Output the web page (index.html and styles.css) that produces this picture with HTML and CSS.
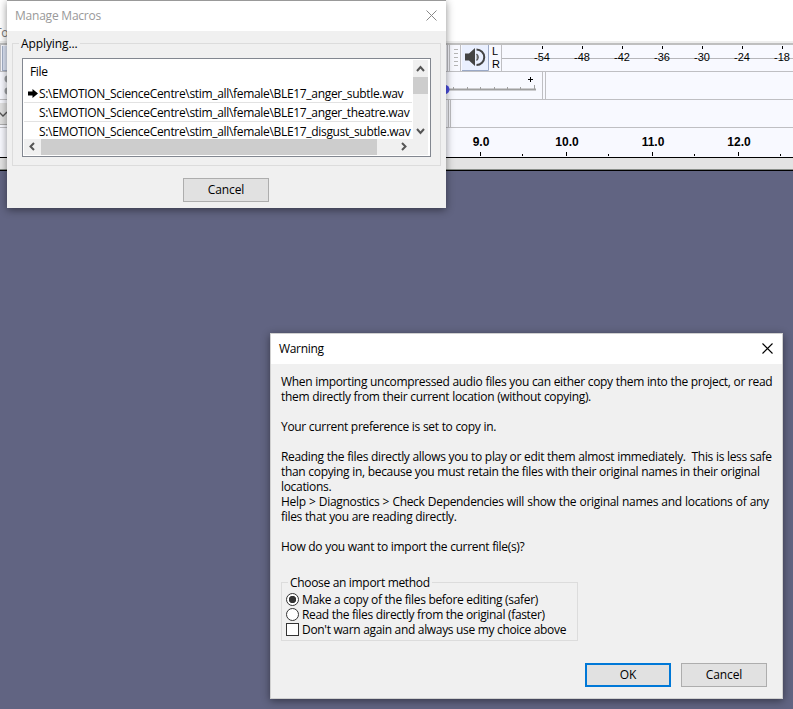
FILE: index.html
```html
<!DOCTYPE html>
<html lang="en">
<head>
<meta charset="utf-8">
<title>Manage Macros</title>
<link rel="stylesheet" href="styles.css">
</head>
<body>
<main class="app">
  <div class="menu-area"><span>To</span></div>
  <section class="toolbars">
    <svg class="left-tools" width="7" height="84" viewBox="0 0 7 84">
      <path d="M.5 0v26M0 26.5h7M0 54.5h7M0 82.5h7" stroke="#bfbfc3"/>
      <path d="M2 1h5v24H2z" fill="#dfe6f7"/>
      <path d="M2.500 1v24M2 25.500h5" stroke="#a5b0c8"/>
      <circle cx="8" cy="34" r="3.500" fill="#a0a2a6"/><circle cx="8" cy="46" r="3.500" fill="#a0a2a6"/>
      <path d="M0 58h7v21H0z" fill="#e1e1e1"/><path d="M0 79.500h7" stroke="#adadad"/>
      <path d="M-1 67l4 4 4-4" fill="none" stroke="#555" stroke-width="1.300"/>
    </svg>
    <div class="right-tools">
      <div class="row meter-row">
        <svg class="meter-button" width="44" height="26" viewBox="0 0 44 26">
          <path d="M2.500 0v26M4.500 0v26M15.500 0v26" stroke="#bfbfc3"/>
          <path d="M9 4.500h4M9 8.500h4M9 12.500h4M9 16.500h4M9 20.500h4" stroke="#b5b5b5"/>
          <path d="M17 0h26v26H17z" fill="#eaf0ff"/>
          <path d="M43.500 0v25.500H17" fill="none" stroke="#9aa8c6"/>
          <path d="M20 8.500h4l6-5.500v18l-6-5.500h-4z" fill="#444"/>
          <path d="M31.500 9q3.500 3 0 6.500" fill="#888" stroke="#555" stroke-width="1.200"/>
          <path d="M31.500 4.500a7.700 7.700 0 0 1 0 15.500" fill="none" stroke="#444" stroke-width="2"/>
        </svg>
        <div class="channels"><span>L</span><span>R</span></div>
        <div class="meter"><span>-54</span><span>-48</span><span>-42</span><span>-36</span><span>-30</span><span>-24</span><span>-18</span></div>
      </div>
      <div class="row">
        <svg width="110" height="27" viewBox="0 0 110 27">
          <path d="M0 17.500h90" stroke="#a0a0a0" stroke-width="2"/>
          <path d="M7.500 15v3M21.500 15v3M34.500 15v3M48.500 15v3M61.500 15v3M74.500 15v3M88.500 13v5" stroke="#a0a0a0"/>
          <circle cx="-1" cy="17.500" r="4.500" fill="#4a4de0"/>
          <path d="M82 7.500h5M84.500 5v5" stroke="#000"/>
          <path d="M96.500 0v27M99.500 0v27" stroke="#bfbfc3"/>
        </svg>
      </div>
      <div class="row">
        <svg width="10" height="27" viewBox="0 0 10 27"><path d="M2.500 0v27M4.500 0v27" stroke="#bfbfc3"/></svg>
      </div>
    </div>
  </section>
  <section class="ruler"><span>9.0</span><span>10.0</span><span>11.0</span><span>12.0</span></section>
  <div class="track-edge"></div>

  <section class="dialog macros">
    <header class="titlebar"><span>Manage Macros</span>
      <svg width="11" height="11" viewBox="0 0 11 11"><path d="M.5.5l10 10M10.500.5l-10 10" stroke="#888"/></svg>
    </header>
    <fieldset class="group applying">
      <legend>Applying...</legend>
      <div class="list">
        <div class="files">
          <div class="file-head">File</div>
          <div class="file"><svg width="10" height="9" viewBox="0 0 10 9"><path d="M0 2.500h4.500V0L10 4.500 4.500 9V6.500H0z"/></svg><span>S:\EMOTION_ScienceCentre\stim_all\female\BLE17_anger_subtle.wav</span></div>
          <div class="file"><span>S:\EMOTION_ScienceCentre\stim_all\female\BLE17_anger_theatre.wav</span></div>
          <div class="file"><span>S:\EMOTION_ScienceCentre\stim_all\female\BLE17_disgust_subtle.wav</span></div>
        </div>
        <div class="vscroll">
          <svg width="15" height="17" viewBox="0 0 15 17"><path d="M4 11l3.500-4 3.500 4" fill="none" stroke="#555" stroke-width="2"/></svg>
          <i></i>
          <svg width="15" height="17" viewBox="0 0 15 17"><path d="M4 7l3.500 4L11 7" fill="none" stroke="#555" stroke-width="2"/></svg>
        </div>
        <div class="hscroll">
          <svg width="17" height="15" viewBox="0 0 17 15"><path d="M10 4L6.500 7.500l3.500 3.500" fill="none" stroke="#555" stroke-width="2"/></svg>
          <i></i>
          <svg width="17" height="15" viewBox="0 0 17 15"><path d="M7 4l3.500 3.500L7 11" fill="none" stroke="#555" stroke-width="2"/></svg>
        </div>
      </div>
    </fieldset>
    <button class="btn">Cancel</button>
  </section>

  <section class="dialog warning">
    <header class="titlebar"><span>Warning</span>
      <svg width="11" height="11" viewBox="0 0 11 11"><path d="M.5.5l10 10M10.500.5l-10 10" stroke="#000" stroke-width="1.100"/></svg>
    </header>
    <div class="message"><span>When importing uncompressed audio files you can either copy them into the project, or read</span>
<span>them directly from their current location (without copying).</span>

<span>Your current preference is set to copy in.</span>

<span>Reading the files directly allows you to play or edit them almost immediately.  This is less safe</span>
<span>than copying in, because you must retain the files with their original names in their original</span>
<span>locations.</span>
<span class="wide">Help &gt; Diagnostics &gt; Check Dependencies will show the original names and locations of any</span>
<span>files that you are reading directly.</span>

<span>How do you want to import the current file(s)?</span></div>
    <fieldset class="group method">
      <legend>Choose an import method</legend>
      <label><i class="radio on"></i><span>Make a copy of the files before editing (safer)</span></label>
      <label><i class="radio"></i><span>Read the files directly from the original (faster)</span></label>
      <label><i class="check"></i><span>Don't warn again and always use my choice above</span></label>
    </fieldset>
    <footer><button class="btn ok">OK</button><button class="btn">Cancel</button></footer>
  </section>
</main>
</body>
</html>
```
FILE: styles.css
```css
* { box-sizing: border-box; }
body { margin: 0; }
svg { display: block; flex: none; }
.app {
  position: relative;
  width: 793px;
  height: 709px;
  overflow: hidden;
  background: #616482;
  font: 12px/15px "Open Sans", "Noto Sans", sans-serif;
  letter-spacing: -0.32px;
  color: #000;
}
.menu-area {
  height: 45px;
  padding-top: 25px;
  background: linear-gradient(#fff 41px, #eee 41px, #eee 43px, #bfbfbf 43px);
  color: #777;
}
.menu-area span { margin-left: -5px; }
.toolbars { display: flex; height: 83px; background: #f8f9ff; }
.right-tools { margin-left: 439px; flex: 1; }
.meter-button { margin-left: -1px; }
.meter-row { padding-left: 1px; }
.row { display: flex; height: 28px; border-bottom: 1px solid #bfbfc3; }
.row.meter-row { height: 27px; margin-left: -1px; }
.channels {
  display: flex;
  flex-direction: column;
  width: 12px;
  padding-left: 3px;
  font: 11px/12px "Liberation Sans", Arial, sans-serif;
  letter-spacing: 0;
}
.channels span { height: 13px; }
.meter {
  display: flex;
  flex: 1;
  padding-left: 20px;
  border-left: 1px solid #bfbfc3;
  background: linear-gradient(#b7b7bb, #b7b7bb) 0 13px / 100% 1px no-repeat;
  font: 11px/13px "Liberation Sans", Arial, sans-serif;
  letter-spacing: 0;
}
.meter span {
  flex: 0 0 40px;
  padding-top: 6px;
  text-align: center;
  background: linear-gradient(#000, #000) 20px 1px / 1px 3px no-repeat;
}
.ruler {
  display: flex;
  height: 30px;
  padding-left: 437px;
  border-bottom: 1px solid #000;
  background: #f8f9ff;
  font: bold 12px/15px "Liberation Sans", Arial, sans-serif;
  letter-spacing: 0;
}
.ruler span {
  flex: 0 0 86px;
  padding: 7px 0 0 2px;
  text-align: center;
  background:
    linear-gradient(#000, #000) 43px 24px / 1px 4px no-repeat,
    linear-gradient(#000, #000) 100% 26px / 1px 2px no-repeat;
}
.track-edge {
  height: 13px;
  border-bottom: 1px solid #000;
  background: linear-gradient(#e3e3e3 11px, #8a8f8a 11px);
}
.dialog {
  position: absolute;
  background: #f0f0f0;
  box-shadow: 0 2px 8px rgba(0, 0, 0, .45);
}
.macros { left: 7px; top: 0; width: 439px; height: 208px; border-top: 1px solid #999; }
.warning { left: 270px; top: 333px; width: 513px; height: 366px; border: 1px solid #d0d0d0; }
.titlebar {
  display: flex;
  align-items: center;
  justify-content: space-between;
  height: 30px;
  padding: 0 10px 1px 8px;
  background: #fff;
}
.titlebar svg { margin: 0 -1px 1px 0; }
.macros .titlebar { color: #999; letter-spacing: -.22px; }
.group { min-width: 0; margin: 0; padding: 0; border: 1px solid #dcdcdc; }
legend { padding: 0 2px; margin-left: 6px; height: 15px; }
.applying { width: 429px; height: 130px; margin: 5px 0 0 5px; padding-left: 9px; }
.applying legend { margin-left: -3px; letter-spacing: -.1px; }
.list {
  display: grid;
  grid-template: 79px 1fr / 1fr 15px;
  width: 409px;
  height: 99px;
  margin-top: 7px;
  padding: 1px 2px 1px 1px;
  border: 1px solid #828790;
  background: #fff;
}
.files { overflow: hidden; }
.file-head { height: 24px; padding: 4px 0 0 6px; }
.file {
  display: flex;
  align-items: center;
  justify-content: flex-end;
  width: 388px;
  height: 19px;
  border-bottom: 1px solid #e2e2e2;
  white-space: pre;
}
.file span { width: 373px; }
.file svg { margin-right: 1px; }
.vscroll { display: flex; flex-direction: column; background: #f0f0f0; }
.vscroll svg:last-child { margin-top: auto; }
.vscroll i { height: 17px; background: #cdcdcd; }
.hscroll { grid-column: 1 / 3; display: flex; background: #f0f0f0; }
.hscroll i { width: 336px; background: #cdcdcd; }
.hscroll svg:last-child { margin-left: 18px; }
.btn {
  width: 86px;
  height: 24px;
  padding: 0 0 2px;
  border: 1px solid #adadad;
  background: #e1e1e1;
  font: inherit;
  letter-spacing: -.1px;
  color: #000;
}
.btn.ok { border: 2px solid #0078d7; }
.macros .btn { display: block; margin: 12px 0 0 176px; }
.message { height: 180px; margin: 10px 0 0 10px; white-space: pre; word-spacing: .15px; }
.message .wide { word-spacing: .5px; }
.method { width: 297px; height: 66px; margin: 21px 0 0 10px; padding-left: 4px; }
.method legend { margin-left: 2px; }
.method label { display: flex; align-items: center; height: 15px; white-space: nowrap; }
.method label:first-of-type { margin-top: 2px; }
.method i { width: 13px; height: 13px; margin-right: 3px; border: 1px solid #333; background: #fff; }
.radio { border-radius: 50%; }
.method .on { background: radial-gradient(circle, #333 3.4px, #fff 4px); }
footer { display: flex; gap: 10px; margin: 22px 0 0 314px; }
```
